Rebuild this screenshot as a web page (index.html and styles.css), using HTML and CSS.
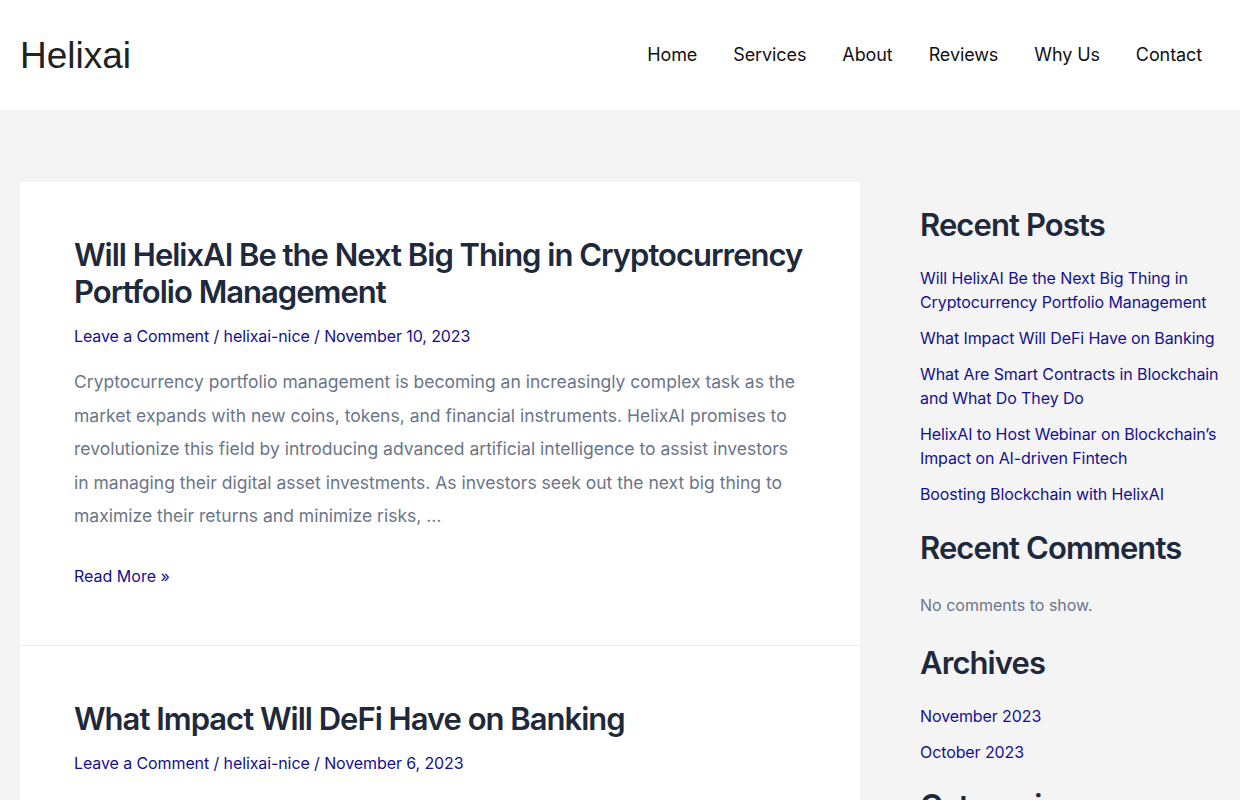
FILE: index.html
```html
<!DOCTYPE html>
<html lang="en">
<head>
<meta charset="utf-8">
<title>Helixai</title>
<link rel="stylesheet" href="styles.css">
</head>
<body>
<header class="site-header">
  <div class="header-inner">
    <a class="logo" href="#">Helixai</a>
    <nav class="main-nav">
      <a href="#">Home</a>
      <a href="#">Services</a>
      <a href="#">About</a>
      <a href="#">Reviews</a>
      <a href="#">Why Us</a>
      <a href="#">Contact</a>
    </nav>
  </div>
</header>
<div class="site-content">
  <main class="posts">
    <article class="post">
      <h2 class="post-title">Will HelixAI Be the Next Big Thing in Cryptocurrency Portfolio Management</h2>
      <div class="post-meta"><a href="#">Leave a Comment</a> / <a href="#">helixai-nice</a> / <a href="#">November 10, 2023</a></div>
      <p class="excerpt">Cryptocurrency portfolio management is becoming an increasingly complex task as the market expands with new coins, tokens, and financial instruments. HelixAI promises to revolutionize this field by introducing advanced artificial intelligence to assist investors in managing their digital asset investments. As investors seek out the next big thing to maximize their returns and minimize risks, …</p>
      <a class="read-more" href="#">Read More »</a>
    </article>
    <article class="post">
      <h2 class="post-title">What Impact Will DeFi Have on Banking</h2>
      <div class="post-meta"><a href="#">Leave a Comment</a> / <a href="#">helixai-nice</a> / <a href="#">November 6, 2023</a></div>
      <p class="excerpt">Decentralized finance, commonly known as DeFi, is rapidly changing the landscape of the financial industry. Built on blockchain technology, DeFi offers an open and permissionless alternative to traditional banking services, …</p>
    </article>
  </main>
  <aside class="sidebar">
    <section class="widget">
      <h2 class="widget-title">Recent Posts</h2>
      <ul class="widget-list">
        <li><a href="#">Will HelixAI Be the Next Big Thing in Cryptocurrency Portfolio Management</a></li>
        <li><a href="#">What Impact Will DeFi Have on Banking</a></li>
        <li><a href="#">What Are Smart Contracts in Blockchain and What Do They Do</a></li>
        <li><a href="#">HelixAI to Host Webinar on Blockchain’s Impact on AI-driven Fintech</a></li>
        <li><a href="#">Boosting Blockchain with HelixAI</a></li>
      </ul>
    </section>
    <section class="widget">
      <h2 class="widget-title">Recent Comments</h2>
      <p class="no-comments">No comments to show.</p>
    </section>
    <section class="widget">
      <h2 class="widget-title">Archives</h2>
      <ul class="widget-list">
        <li><a href="#">November 2023</a></li>
        <li><a href="#">October 2023</a></li>
      </ul>
    </section>
    <section class="widget">
      <h2 class="widget-title">Categories</h2>
      <ul class="widget-list">
        <li><a href="#">Uncategorized</a></li>
      </ul>
    </section>
  </aside>
</div>
</body>
</html>
```

FILE: styles.css
```css
* { box-sizing: border-box; }
html, body { margin: 0; padding: 0; }
body {
  background: #f4f4f5;
  font-family: Inter, "Noto Sans", sans-serif;
  color: #64748b;
  font-size: 16px;
  line-height: 1.5;
}
a { color: #14108f; text-decoration: none; }

.site-header { background: #ffffff; }
.header-inner {
  height: 110px;
  padding: 0 20px;
  display: flex;
  align-items: center;
  justify-content: space-between;
}
.logo {
  font-family: "Liberation Sans", Arial, sans-serif;
  font-size: 37px;
  color: #222222;
  line-height: 1;
}
.main-nav { display: flex; }
.main-nav a {
  color: #111111;
  font-size: 18px;
  letter-spacing: -0.1px;
  padding: 0 18px;
  line-height: 110px;
}

.site-content {
  display: flex;
  align-items: flex-start;
  padding: 72px 0 0 20px;
}
.posts {
  width: 840px;
  flex: none;
  background: #ffffff;
}
.post {
  padding: 54px 54px;
  border-bottom: 1px solid #eeeeee;
}
.post-title {
  margin: 0;
  font-size: 31px;
  font-weight: 600;
  letter-spacing: -1px;
  line-height: 37px;
  color: #1e293b;
}
.post-meta {
  margin-top: 14px;
  font-size: 16px;
  letter-spacing: -0.1px;
  line-height: 24px;
  color: #14108f;
}
.excerpt {
  margin: 17px 0 0;
  font-size: 17.5px;
  line-height: 33.5px;
  color: #6b7589;
}
.read-more {
  display: inline-block;
  margin-top: 29px;
  margin-bottom: 1px;
  font-size: 16px;
  line-height: 28px;
}

.sidebar {
  flex: 1;
  padding-left: 60px;
  padding-top: 24px;
}
.widget + .widget { margin-top: 23px; }
.widget-title {
  margin: 0 0 23px;
  font-size: 31px;
  font-weight: 600;
  letter-spacing: -0.9px;
  line-height: 37px;
  color: #1e293b;
}
.widget-list {
  list-style: none;
  margin: 0;
  padding: 0;
}
.widget-list li { font-size: 16px; line-height: 24px; letter-spacing: -0.1px; }
.widget-list li + li { margin-top: 12px; }
.no-comments {
  margin: 0;
  padding: 4px 0 4px;
  font-size: 16px;
  line-height: 24px;
  color: #6b7589;
}
```
